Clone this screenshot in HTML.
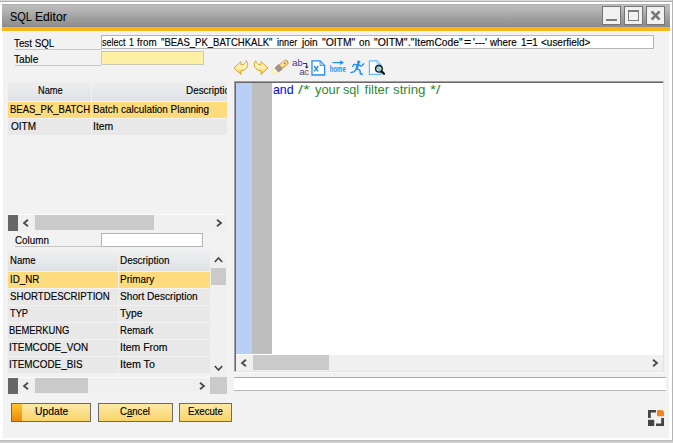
<!DOCTYPE html>
<html><head><meta charset="utf-8">
<style>
*{box-sizing:border-box;margin:0;padding:0}
html,body{width:673px;height:443px;overflow:hidden;background:#fff;font-family:"Liberation Sans",sans-serif;font-size:11px;color:#000}
body{position:relative}
.a{position:absolute}
.t{position:absolute;font-size:11px;line-height:13px;white-space:pre;color:#000;-webkit-text-stroke:0.15px #000}
.t span{display:inline-block;transform-origin:0 50%}
.e{top:82px;font-size:13px;line-height:15px;-webkit-text-stroke:0}
.q{top:36px}
.ul{position:absolute;height:1px;background:#c6c6c6}
.wb{position:absolute;top:6px;width:19px;height:19px;border:1px solid #757575;background:#f1f1f1}
.row{position:absolute;background:#e8e8e8}
.sel{background:#fedc7e}
.hd{background:linear-gradient(#efefef,#e6e8ea 50%,#dfe2e6)}
.thumb{position:absolute;background:#cacaca}
.dk{position:absolute;background:#666}
.btn{position:absolute;top:403px;height:19px;border:1px solid #6b6b6b;background:linear-gradient(#fbe9a6,#fadf88 50%,#f8d468)}
</style></head><body>
<!-- frame -->
<div class="a" style="left:0;top:0;width:673px;height:1px;background:#dadada"></div><div class="a" style="left:0;top:1px;width:673px;height:1px;background:#adadad"></div>
<div class="a" style="left:672px;top:0;width:1px;height:443px;background:#b4b4b4"></div>
<div class="a" style="left:0;top:440px;width:673px;height:3px;background:linear-gradient(#b8b8b8,#d8d8d8)"></div>
<div class="a" style="left:3px;top:4px;width:666px;height:434px;background:#f2f2f2"></div>
<div class="a" style="left:2px;top:4px;width:668px;height:23px;background:linear-gradient(#a8a8a8,#babbba 6%,#b2b3b2 30%,#9f9f9f 60%,#8c8c8c)"></div>
<div class="a" style="left:2px;top:27px;width:668px;height:4px;background:#fdb515"></div><div class="a" style="left:3px;top:31px;width:666px;height:1px;background:#fafafa"></div>
<div class="t" style="left:10.3px;top:10px;font-size:12px;line-height:14px;-webkit-text-stroke:0.1px #000"><span style="transform:scaleX(.904)">SQL</span></div><div class="t" style="left:34.6px;top:10px;font-size:12px;line-height:14px;-webkit-text-stroke:0.1px #000"><span style="transform:scaleX(1.013)">Editor</span></div>
<!-- window buttons -->
<div class="wb" style="left:602px"><div class="a" style="left:3px;top:12px;width:11px;height:2px;background:#7c7c7c"></div></div>
<div class="wb" style="left:624px"><div class="a" style="left:3px;top:3px;width:11px;height:11px;border:1px solid #7c7c7c;border-top-width:2px"></div></div>
<div class="wb" style="left:646px"><svg class="a" style="left:3px;top:3px" width="11" height="11" viewBox="0 0 11 11"><path d="M1.6 1.4 L9.6 9.6 M9.6 1.4 L1.6 9.6" stroke="#777" stroke-width="2.6" fill="none"/></svg></div>

<!-- labels/inputs -->
<div class="t" style="left:14.0px;top:37px"><span style="transform:scaleX(0.891)">Test SQL</span></div>
<div class="ul" style="left:15px;top:49px;width:86px"></div>
<div class="t" style="left:14.0px;top:53px"><span style="transform:scaleX(0.923)">Table</span></div>
<div class="ul" style="left:15px;top:65px;width:86px"></div>
<div class="a" style="left:101px;top:35px;width:553px;height:14px;border:1px solid #b2b6b8;background:#fff"></div>
<div class="t q" style="left:102.3px"><span style="transform:scaleX(0.821)">select</span></div><div class="t q" style="left:129.0px"><span style="transform:scaleX(0.8)">1</span></div><div class="t q" style="left:137.2px"><span style="transform:scaleX(0.891)">from</span></div><div class="t q" style="left:160.9px"><span style="transform:scaleX(0.866)">&quot;BEAS_PK_BATCHKALK&quot;</span></div><div class="t q" style="left:276.7px"><span style="transform:scaleX(0.828)">inner</span></div><div class="t q" style="left:301.9px"><span style="transform:scaleX(0.917)">join</span></div><div class="t q" style="left:321.9px"><span style="transform:scaleX(0.94)">&quot;OITM&quot;</span></div><div class="t q" style="left:359.4px"><span style="transform:scaleX(0.892)">on</span></div><div class="t q" style="left:374.3px"><span style="transform:scaleX(0.949)">&quot;OITM&quot;</span></div><div class="t q" style="left:407.9px"><span style="transform:scaleX(0.931)">.&quot;ItemCode&quot;</span></div><div class="t q" style="left:464.1px"><span style="transform:scaleX(1.117)">=</span></div><div class="t q" style="left:472.5px"><span style="transform:scaleX(0.913)">&#x27;---&#x27;</span></div><div class="t q" style="left:489.5px"><span style="transform:scaleX(0.893)">where</span></div><div class="t q" style="left:520.5px"><span style="transform:scaleX(0.9)">1=1</span></div><div class="t q" style="left:541.0px"><span style="transform:scaleX(0.907)">&lt;userfield&gt;</span></div>
<div class="a" style="left:101px;top:51px;width:103px;height:14px;border:1px solid #c9c9b8;background:#fef0a4"></div>

<!-- table grid -->
<div class="row hd" style="left:8px;top:81px;width:83px;height:20px"></div>
<div class="row hd" style="left:92px;top:81px;width:135px;height:20px"></div>
<div class="row sel" style="left:8px;top:102px;width:83px;height:16px"></div>
<div class="row sel" style="left:92px;top:102px;width:135px;height:16px"></div>
<div class="row" style="left:8px;top:119px;width:83px;height:16px"></div>
<div class="row" style="left:92px;top:119px;width:135px;height:16px"></div>
<div class="t" style="left:38.4px;top:84px"><span style="transform:scaleX(0.843)">Name</span></div>
<div class="t" style="left:185.7px;top:84px;width:41px;overflow:hidden"><span style="transform:scaleX(0.898)">Description</span></div>
<div class="t" style="left:9.8px;top:103px;width:80px;overflow:hidden"><span style="transform:scaleX(0.863)">BEAS_PK_BATCHKALK</span></div>
<div class="t" style="left:93.1px;top:103px"><span style="transform:scaleX(0.9)">Batch calculation Planning</span></div>
<div class="t" style="left:10.7px;top:120px"><span style="transform:scaleX(0.911)">OITM</span></div>
<div class="t" style="left:93.1px;top:120px"><span style="transform:scaleX(0.945)">Item</span></div>

<!-- hscroll 1 -->
<div class="a" style="left:8px;top:214px;width:219px;height:17px;background:#f0f0f0"></div>
<div class="dk" style="left:8px;top:214px;width:10px;height:17px"></div>
<div class="thumb" style="left:35px;top:215px;width:119px;height:15px"></div>
<svg class="a" style="left:22px;top:219px" width="8" height="8" viewBox="0 0 8 8"><path d="M6 0.7 L2 4 L6 7.3" stroke="#4a4a4a" stroke-width="1.8" fill="none"/></svg>
<svg class="a" style="left:215px;top:219px" width="8" height="8" viewBox="0 0 8 8"><path d="M2 0.7 L6 4 L2 7.3" stroke="#4a4a4a" stroke-width="1.8" fill="none"/></svg>

<div class="t" style="left:14.5px;top:234px"><span style="transform:scaleX(0.895)">Column</span></div>
<div class="ul" style="left:15px;top:246px;width:86px"></div>
<div class="a" style="left:101px;top:233px;width:102px;height:14px;border:1px solid #b2b6b8;background:#fff"></div>

<!-- column grid -->
<div class="row hd" style="left:8px;top:251px;width:110px;height:20px"></div>
<div class="row hd" style="left:119px;top:251px;width:91px;height:20px"></div>
<div class="t" style="left:9.6px;top:254px"><span style="transform:scaleX(0.871)">Name</span></div>
<div class="t" style="left:119.9px;top:254px"><span style="transform:scaleX(0.898)">Description</span></div>
<div class="row sel" style="left:8px;top:272px;width:110px;height:16px"></div><div class="row sel" style="left:119px;top:272px;width:91px;height:16px"></div>
<div class="row" style="left:8px;top:289px;width:110px;height:16px"></div><div class="row" style="left:119px;top:289px;width:91px;height:16px"></div>
<div class="row" style="left:8px;top:306px;width:110px;height:16px"></div><div class="row" style="left:119px;top:306px;width:91px;height:16px"></div>
<div class="row" style="left:8px;top:323px;width:110px;height:16px"></div><div class="row" style="left:119px;top:323px;width:91px;height:16px"></div>
<div class="row" style="left:8px;top:340px;width:110px;height:16px"></div><div class="row" style="left:119px;top:340px;width:91px;height:16px"></div>
<div class="row" style="left:8px;top:357px;width:110px;height:16px"></div><div class="row" style="left:119px;top:357px;width:91px;height:16px"></div>
<div class="t" style="left:9.6px;top:273px"><span style="transform:scaleX(0.888)">ID_NR</span></div><div class="t" style="left:119.9px;top:273px"><span style="transform:scaleX(0.905)">Primary</span></div>
<div class="t" style="left:10.3px;top:290px"><span style="transform:scaleX(0.88)">SHORTDESCRIPTION</span></div><div class="t" style="left:120.3px;top:290px"><span style="transform:scaleX(0.921)">Short Description</span></div>
<div class="t" style="left:10.3px;top:307px"><span style="transform:scaleX(0.843)">TYP</span></div><div class="t" style="left:120.3px;top:307px"><span style="transform:scaleX(0.946)">Type</span></div>
<div class="t" style="left:9.4px;top:324px"><span style="transform:scaleX(0.852)">BEMERKUNG</span></div><div class="t" style="left:119.6px;top:324px"><span style="transform:scaleX(0.866)">Remark</span></div>
<div class="t" style="left:9.4px;top:341px"><span style="transform:scaleX(0.899)">ITEMCODE_VON</span></div><div class="t" style="left:119.6px;top:341px"><span style="transform:scaleX(0.949)">Item From</span></div>
<div class="t" style="left:9.4px;top:358px"><span style="transform:scaleX(0.898)">ITEMCODE_BIS</span></div><div class="t" style="left:119.5px;top:358px"><span style="transform:scaleX(0.974)">Item To</span></div>
<!-- vscroll -->
<div class="a" style="left:210px;top:251px;width:17px;height:126px;background:#f0f0f0"></div>
<div class="thumb" style="left:211px;top:268px;width:15px;height:17px"></div>
<svg class="a" style="left:214px;top:256px" width="9" height="8" viewBox="0 0 9 8"><path d="M0.8 6 L4.5 2 L8.2 6" stroke="#4a4a4a" stroke-width="1.8" fill="none"/></svg>
<svg class="a" style="left:214px;top:364px" width="9" height="8" viewBox="0 0 9 8"><path d="M0.8 2 L4.5 6 L8.2 2" stroke="#4a4a4a" stroke-width="1.8" fill="none"/></svg>
<!-- hscroll 2 -->
<div class="a" style="left:8px;top:377px;width:202px;height:17px;background:#f0f0f0"></div>
<div class="dk" style="left:8px;top:377px;width:10px;height:17px"></div>
<div class="thumb" style="left:35px;top:378px;width:53px;height:15px"></div>
<div class="thumb" style="left:210px;top:377px;width:17px;height:17px"></div>
<svg class="a" style="left:22px;top:382px" width="8" height="8" viewBox="0 0 8 8"><path d="M6 0.7 L2 4 L6 7.3" stroke="#4a4a4a" stroke-width="1.8" fill="none"/></svg>
<svg class="a" style="left:198px;top:382px" width="8" height="8" viewBox="0 0 8 8"><path d="M2 0.7 L6 4 L2 7.3" stroke="#4a4a4a" stroke-width="1.8" fill="none"/></svg>


<!-- toolbar icons -->
<svg class="a" style="left:233px;top:60px" width="17" height="16" viewBox="0 0 17 16">
<defs><linearGradient id="g1" x1="0" y1="0" x2="0" y2="1"><stop offset="0" stop-color="#fffbe0"/><stop offset="0.55" stop-color="#fdeea8"/><stop offset="1" stop-color="#f3c040"/></linearGradient></defs>
<path d="M1 8 L8 1.6 L8 5 C10.5 5 12.6 3.6 13.4 0.8 C16.4 4.5 14 10.6 8 10.8 L8 14.4 Z" fill="url(#g1)" stroke="#d8a526" stroke-width="1" stroke-linejoin="round"/>
</svg>
<svg class="a" style="left:252.3px;top:60px" width="17" height="16" viewBox="0 0 17 16">
<path d="M16 8 L9 1.6 L9 5 C6.5 5 4.4 3.6 3.6 0.8 C0.6 4.5 3 10.6 9 10.8 L9 14.4 Z" fill="url(#g1)" stroke="#d8a526" stroke-width="1" stroke-linejoin="round"/>
</svg>
<svg class="a" style="left:271px;top:59px" width="18" height="17" viewBox="0 0 18 17">
<defs><linearGradient id="g2" x1="0" y1="0" x2="0" y2="1"><stop offset="0" stop-color="#f9c658"/><stop offset="0.45" stop-color="#fef3c4"/><stop offset="1" stop-color="#f3aa3c"/></linearGradient></defs>
<g transform="translate(1.6 14.2) rotate(-39) scale(.95 .86)">
<path d="M0 -1.8 L6 -2.8 L6 2.8 L0 1.8 Z" fill="#fffbd8" stroke="#f6e58a" stroke-width="0.9"/>
<path d="M5.4 -3 L10 -3.6 L11.2 -2.8 L11.2 2.8 L10 3.6 L5.4 3 Z" fill="#9b9696" stroke="#8f7350" stroke-width="0.5"/>
<rect x="11.2" y="-2.8" width="8.4" height="5.6" rx="0.8" fill="url(#g2)" stroke="#e39a22" stroke-width="0.8"/>
<rect x="19.2" y="-1.6" width="1.2" height="3.2" fill="#9a9a9a"/>
<rect x="15.5" y="-0.6" width="2" height="1" fill="#3a66c8"/>
</g>
</svg>
<svg class="a" style="left:291px;top:59px" width="19" height="17" viewBox="0 0 19 17">
<g font-family="Liberation Sans" font-size="8.4">
<text transform="translate(0.9 6.9) scale(1.18 1)" fill="#3e3e90">a</text>
<text transform="translate(6.5 6.9) scale(1.12 1)" fill="#64288a">b</text>
<text transform="translate(8.2 15.7) scale(1.18 1)" fill="#3e3e90">a</text>
<text transform="translate(13.4 15.7) scale(1.1 1)" fill="#a83030">c</text>
</g>
<path d="M12 4.5 H15.7 V8.6" stroke="#2e2e70" stroke-width="1.1" fill="none"/><path d="M13.8 7.6 L15.7 9.8 L17.6 7.6 Z" fill="#2e2e70"/>
</svg>
<svg class="a" style="left:311px;top:60px" width="15" height="16" viewBox="0 0 15 16">
<path d="M1 0.9 H9 L13.6 5.5 V15 H1 Z" fill="#fff" stroke="#1f8ff5" stroke-width="1.3"/>
<path d="M9 0.9 V5.5 H13.6 Z" fill="#b9dcfb" stroke="#1f8ff5" stroke-width="0.8"/>
<path d="M3.2 6 L7.2 11.4 M7.2 6 L3.2 11.4" stroke="#1f8ff5" stroke-width="1.4"/>
</svg>
<svg class="a" style="left:329px;top:60px" width="18" height="14" viewBox="0 0 18 14">
<path d="M3.4 2.6 H12.4" stroke="#1f8ff5" stroke-width="1.2"/><path d="M11.2 0.2 L15 2.6 L11.2 5 Z" fill="#1f8ff5"/>
<text x="0.8" y="12" font-family="Liberation Sans" font-weight="bold" font-size="9.4" fill="#1f8ff5" textLength="16" lengthAdjust="spacingAndGlyphs">home</text>
</svg>
<svg class="a" style="left:349.8px;top:60px" width="16" height="16" viewBox="0 0 16 16">
<g stroke="#1f8ff5" fill="none" stroke-linecap="round" stroke-linejoin="round">
<circle cx="8.6" cy="2" r="1.3" fill="#1f8ff5" stroke-width="0.6"/>
<path d="M8.2 4.2 L6.6 8.6" stroke-width="2.4"/>
<path d="M7.8 4.6 L4 4.4 L2.6 6.4" stroke-width="1.3"/>
<path d="M8.4 4.8 L11.4 6.2 L13.8 3.8" stroke-width="1.3"/>
<path d="M6.6 8.6 L4.4 11.6 L1 12.6" stroke-width="1.5"/>
<path d="M6.8 8.6 L10 10.4 L10.4 14 L12.4 14.2" stroke-width="1.5"/>
</g>
</svg>
<svg class="a" style="left:368px;top:60px" width="19" height="16" viewBox="0 0 19 16">
<path d="M1.4 0.8 H9 L12.6 4.4 V14.4 H1.4 Z" fill="#fff" stroke="#5ebcf8" stroke-width="1.2"/>
<path d="M9 0.8 V4.4 H12.6 Z" fill="#cfe8fb" stroke="#5ebcf8" stroke-width="0.7"/>
<circle cx="10.9" cy="8.8" r="3.3" fill="#a9dfe6" stroke="#1a1a1a" stroke-width="1.4"/>
<path d="M9.8 7.4 L12.2 10.2" stroke="#bdbdbd" stroke-width="1.8"/><circle cx="9.6" cy="8" r="0.8" fill="#20e8f0"/><circle cx="11.2" cy="10.4" r="0.7" fill="#20e8f0"/>
<path d="M13.6 11.4 L16 13.8" stroke="#111" stroke-width="2.3" stroke-linecap="round"/>
</svg>

<!-- editor -->
<div class="a" style="left:234px;top:81px;width:430px;height:291px;background:#fff;border-top:1px solid #a0a0a0;border-left:1px solid #a0a0a0;border-right:1px solid #e3e3e3;border-bottom:1px solid #e3e3e3"></div>
<div class="a" style="left:235px;top:82px;width:428px;height:1px;background:#696969"></div>
<div class="a" style="left:235px;top:82px;width:1px;height:289px;background:#696969"></div>
<div class="a" style="left:236px;top:83px;width:16px;height:271px;background:#b8d0f6"></div>
<div class="a" style="left:252px;top:83px;width:20px;height:271px;background:#bebebe"></div>
<div class="t e" style="left:272.8px;color:#0000ff"><span style="transform:scaleX(0.95)">and</span></div><div class="t e" style="left:298px;color:#2e8b2e"><span style="transform:scaleX(1.35)">/*</span></div><div class="t e" style="left:314.8px;color:#2e8b2e"><span style="transform:scaleX(0.985)">your</span></div><div class="t e" style="left:343.3px;color:#2e8b2e"><span style="transform:scaleX(0.97)">sql</span></div><div class="t e" style="left:364.6px;color:#2e8b2e"><span style="transform:scaleX(1.0)">filter</span></div><div class="t e" style="left:393.3px;color:#2e8b2e"><span style="transform:scaleX(1.02)">string</span></div><div class="t e" style="left:429.8px;color:#2e8b2e"><span style="transform:scaleX(1.2)">*/</span></div>
<div class="a" style="left:236px;top:355px;width:427px;height:16px;background:#f0f0f0"></div>
<div class="thumb" style="left:253px;top:355px;width:76px;height:15px"></div>
<svg class="a" style="left:240px;top:359px" width="8" height="8" viewBox="0 0 8 8"><path d="M6 0.7 L2 4 L6 7.3" stroke="#4a4a4a" stroke-width="1.8" fill="none"/></svg>
<svg class="a" style="left:651px;top:359px" width="8" height="8" viewBox="0 0 8 8"><path d="M2 0.7 L6 4 L2 7.3" stroke="#4a4a4a" stroke-width="1.8" fill="none"/></svg>

<div class="a" style="left:234px;top:377px;width:432px;height:14px;background:#fff;border-top:1px solid #a9adaf;border-bottom:1px solid #b4b8ba"></div>

<div class="a" style="left:8px;top:214px;width:219px;height:1px;background:#fbfbfb"></div>
<div class="a" style="left:8px;top:377px;width:202px;height:1px;background:#fbfbfb"></div>
<div class="a" style="left:234px;top:372px;width:430px;height:1px;background:#fafafa"></div>
<!-- buttons -->
<div class="btn" style="left:11px;width:80px"><div class="a" style="left:0;top:0;width:10px;height:17px;background:linear-gradient(#fbc52a,#f6a81c 50%,#ee8712)"></div></div>
<div class="btn" style="left:98px;width:75px"></div>
<div class="btn" style="left:179px;width:53px"></div>
<div class="t" style="left:35.2px;top:405px"><span style="transform:scaleX(0.938)">Update</span></div>
<div class="t" style="left:120.4px;top:405px"><span style="transform:scaleX(0.871)">C<u>a</u>ncel</span></div>
<div class="t" style="left:187.8px;top:405px"><span style="transform:scaleX(0.879)">Execute</span></div>

<!-- corner icon -->
<svg class="a" style="left:648px;top:410px" width="16" height="16" viewBox="0 0 16 16">
<path d="M0 0 H8 V2.4 H2.8 V8 H0 Z" fill="#444"/>
<path d="M9 0 H13 Q16 0 16 3 V6.2 H9 Z" fill="#f58220"/>
<rect x="0" y="9.8" width="6.2" height="6.2" fill="#444"/>
<path d="M16 8 V16 H8 V13.5 H13.2 V8 Z" fill="#444"/>
</svg>
</body></html>
